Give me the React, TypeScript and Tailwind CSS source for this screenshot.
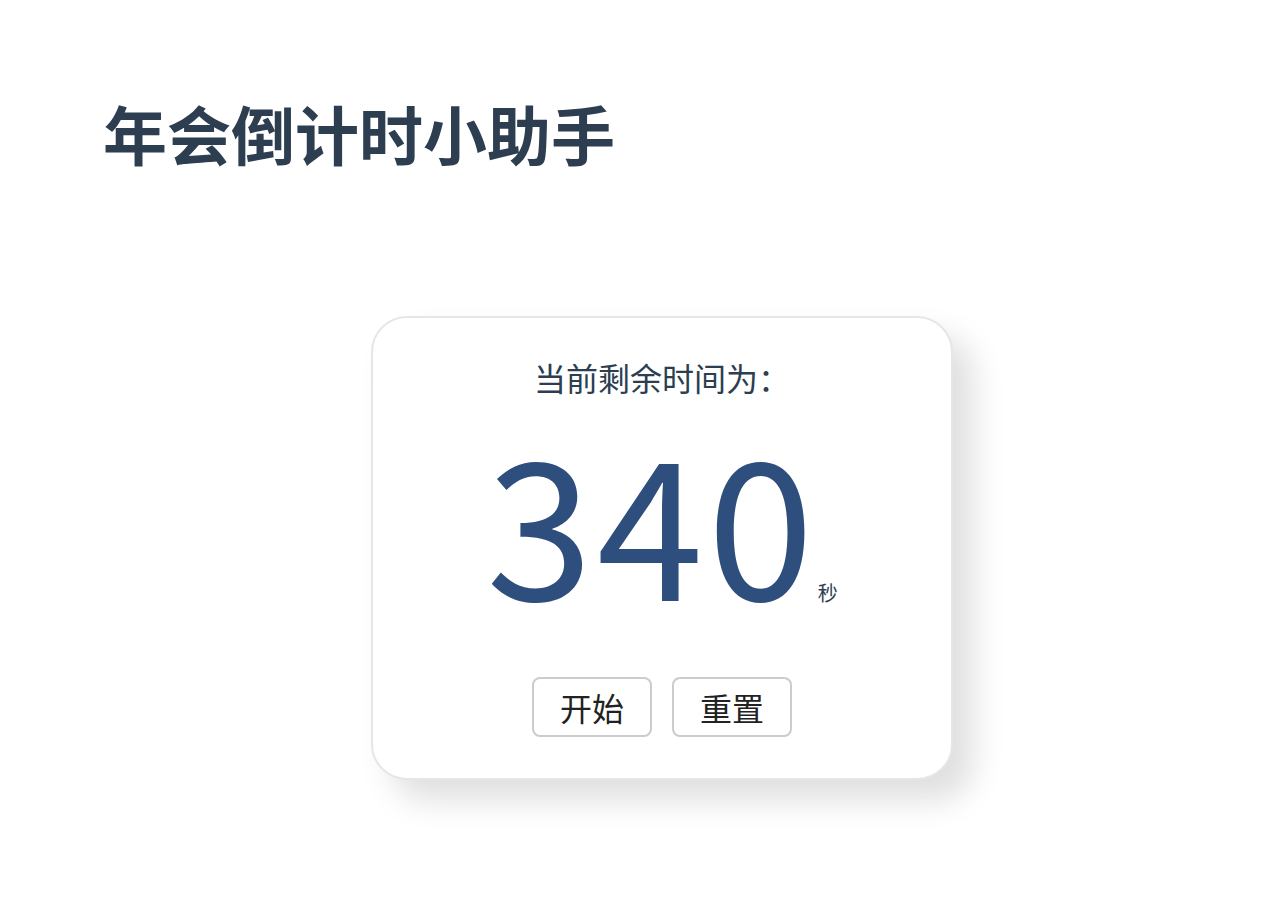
import { useState } from "react";

const cjk = '"Noto Sans CJK SC", "Noto Sans", sans-serif';

const App = () => {
  const [seconds, setSeconds] = useState(340);
  const [running, setRunning] = useState(false);

  return (
    <div className="min-h-[900px] w-full bg-white" style={{ fontFamily: cjk }}>
      {/* Header */}
      <h1 className="pl-[103px] pt-[100px] text-[64px] leading-none font-bold text-[#2c3e50]">
        年会倒计时小助手
      </h1>

      {/* Countdown card */}
      <div className="ml-[371px] mt-[152px] flex w-[582px] flex-col items-center rounded-[36px] border-2 border-[#e6e6e6] bg-white pt-[43px] pb-[41px] shadow-[20px_20px_32px_rgba(0,0,0,0.13)]">
        <p className="text-[32px] leading-none text-[#2c3e50]">当前剩余时间为：</p>

        <div className="mt-[28px] flex items-baseline">
          <span className="text-[192px] leading-none tracking-[4px] text-[#2e4f7d]">{seconds}</span>
          <span className="text-[20px] leading-none text-[#2c3e50]">秒</span>
        </div>

        <div className="mt-[64px] flex gap-[20px]">
          <button
            onClick={() => setRunning(!running)}
            className="rounded-[8px] border-2 border-[#cccccc] bg-white px-[26px] py-[12px] text-[32px] leading-none text-[#222]"
          >
            开始
          </button>
          <button
            onClick={() => {
              setRunning(false);
              setSeconds(340);
            }}
            className="rounded-[8px] border-2 border-[#cccccc] bg-white px-[26px] py-[12px] text-[32px] leading-none text-[#222]"
          >
            重置
          </button>
        </div>
      </div>
    </div>
  );
};

export default App;
